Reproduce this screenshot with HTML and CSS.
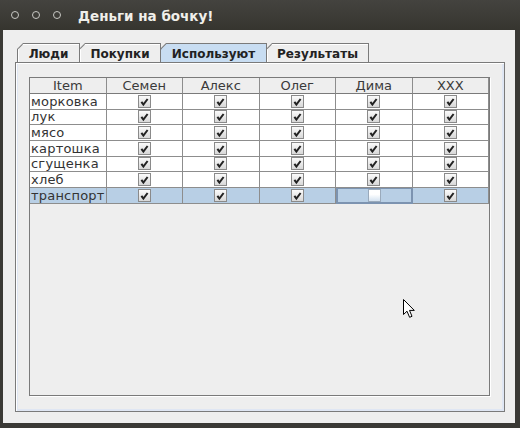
FILE: index.html
```html
<!DOCTYPE html>
<html>
<head>
<meta charset="utf-8">
<link rel="stylesheet" href="styles.css">
</head>
<body>
<div class="window">
  <div class="titlebar">
    <div class="controls"><span class="dot"></span><span class="dot"></span><span class="dot"></span></div>
    <div class="title">Деньги на бочку!</div>
  </div>
  <div class="frame">
    <div class="tabs">
      <div class="tab t1"><span>Люди</span></div>
      <div class="tab t2"><span>Покупки</span></div>
      <div class="tab t3 selected"><span>Используют</span></div>
      <div class="tab t4"><span>Результаты</span></div>
    </div>
    <div class="panel">
      <div class="scroll">
        <div class="grid">
          <div class="hd">Item</div><div class="hd">Семен</div><div class="hd">Алекс</div><div class="hd">Олег</div><div class="hd">Дима</div><div class="hd">XXX</div>

          <div class="c name">морковка</div><div class="c"><i class="cb on"></i></div><div class="c"><i class="cb on"></i></div><div class="c"><i class="cb on"></i></div><div class="c"><i class="cb on"></i></div><div class="c"><i class="cb on"></i></div>
          <div class="c name">лук</div><div class="c"><i class="cb on"></i></div><div class="c"><i class="cb on"></i></div><div class="c"><i class="cb on"></i></div><div class="c"><i class="cb on"></i></div><div class="c"><i class="cb on"></i></div>
          <div class="c name">мясо</div><div class="c"><i class="cb on"></i></div><div class="c"><i class="cb on"></i></div><div class="c"><i class="cb on"></i></div><div class="c"><i class="cb on"></i></div><div class="c"><i class="cb on"></i></div>
          <div class="c name">картошка</div><div class="c"><i class="cb on"></i></div><div class="c"><i class="cb on"></i></div><div class="c"><i class="cb on"></i></div><div class="c"><i class="cb on"></i></div><div class="c"><i class="cb on"></i></div>
          <div class="c name">сгущенка</div><div class="c"><i class="cb on"></i></div><div class="c"><i class="cb on"></i></div><div class="c"><i class="cb on"></i></div><div class="c"><i class="cb on"></i></div><div class="c"><i class="cb on"></i></div>
          <div class="c name">хлеб</div><div class="c"><i class="cb on"></i></div><div class="c"><i class="cb on"></i></div><div class="c"><i class="cb on"></i></div><div class="c"><i class="cb on"></i></div><div class="c"><i class="cb on"></i></div>
          <div class="c name sel">транспорт</div><div class="c sel"><i class="cb on"></i></div><div class="c sel"><i class="cb on"></i></div><div class="c sel"><i class="cb on"></i></div><div class="c sel focus"><i class="cb off"></i></div><div class="c sel"><i class="cb on"></i></div>
        </div>
      </div>
    </div>
  </div>
  <svg class="cursor" width="13" height="20" viewBox="0 0 13 20"><path d="M0.5 0.5 L0.5 15.5 L4 12.2 L6.6 18.3 L9 17.3 L6.5 11.4 L11.3 11.4 Z" fill="#fff" stroke="#000" stroke-width="1" stroke-linejoin="miter"/></svg>
</div>
</body>
</html>
```
FILE: styles.css
```css
html, body { margin: 0; padding: 0; }
body { background: #3a3935; font-family: "DejaVu Sans", sans-serif; }
.window { position: relative; width: 520px; height: 428px; background: #3a3935; overflow: hidden; }
.titlebar { height: 30px; display: flex; align-items: center; background: linear-gradient(#44433f, #36352f); }
.controls { display: flex; gap: 13px; margin-left: 11px; width: 59px; }
.dot { width: 6px; height: 6px; border: 1.5px solid #c8c8c4; border-radius: 50%; display: block; }
.title { color: #f0efea; font-weight: bold; font-size: 13.5px; margin-left: 8px; margin-top: 1px; }
.frame { margin-left: 3px; width: 512px; height: 393px; background: #eeeeee; padding: 13px 0 0 12px; box-sizing: border-box; }
.tabs { display: flex; height: 19px; margin-left: 2px; }
.tab { height: 19px; background: #7a7a7a; clip-path: polygon(0 6px, 6px 0, 100% 0, 100% 100%, 0 100%); display: flex; margin-right: -1px; }
.tab span { flex: 1; margin: 1px 1px 0 1px; background: #eeeeee; clip-path: polygon(0 5.4px, 5.4px 0, 100% 0, 100% 100%, 0 100%); box-shadow: inset 1px 1px 0 #ffffff; font-weight: bold; font-size: 12px; color: #222; display: flex; align-items: center; justify-content: center; padding-top: 1px; }
.tab.selected span { background: #c8ddf2; box-shadow: none; }
.t1 { width: 63px; }
.t2 { width: 82px; }
.t3 { width: 107px; }
.t4 { width: 103px; }
.panel { width: 490px; height: 350px; box-sizing: border-box; border: 1px solid #7a7a7a; padding: 14px 14px 15px 13px; box-shadow: inset 1px 1px 0 #ffffff, inset 2px -2px 0 #dfe6f3, inset -2px 0 0 #dfe6f3; }
.scroll { height: 100%; box-sizing: border-box; border: 1px solid #7a7a7a; box-shadow: 1px 1px 0 #ffffff; background: #eeeeee; }
.grid { width: 459px; display: grid; grid-template-columns: repeat(6, minmax(0, 1fr)); grid-template-rows: 16px; grid-auto-rows: 15.67px; }
.hd { background: #eeeeee; border-right: 1px solid #8d8d8d; border-bottom: 1px solid #7a7a7a; font-size: 13px; color: #3a3a3a; text-align: center; line-height: 15px; box-sizing: border-box; }
.c { background: #ffffff; border-right: 1px solid #8d8d8d; border-bottom: 1px solid #8d8d8d; box-sizing: border-box; display: flex; align-items: center; justify-content: center; overflow: hidden; }
.c.name { justify-content: flex-start; padding-left: 1px; font-size: 13px; letter-spacing: 0.2px; color: #333; white-space: nowrap; }
.c.sel { background: #b8cfe5; }
.c.focus { border: 2px solid #7c93b0; border-top-width: 1px; }
.cb { display: block; width: 13px; height: 13px; box-sizing: border-box; border: 1px solid #8a8a8a; background: linear-gradient(#fbfbfb, #dcdcdc); }
.cb.on { background-image: url("data:image/svg+xml,%3Csvg xmlns='http://www.w3.org/2000/svg' width='11' height='11'%3E%3Cpath d='M2.4 5.8 L4.4 8.6 L8.6 3' fill='none' stroke='%23222' stroke-width='2'/%3E%3C/svg%3E"), linear-gradient(#fbfbfb, #d8d8d8); background-repeat: no-repeat; }
.cb.off { background: linear-gradient(#ffffff 40%, #d5e3f1); border-color: #9aaabb; }
.cursor { position: absolute; left: 403px; top: 299px; }
```
